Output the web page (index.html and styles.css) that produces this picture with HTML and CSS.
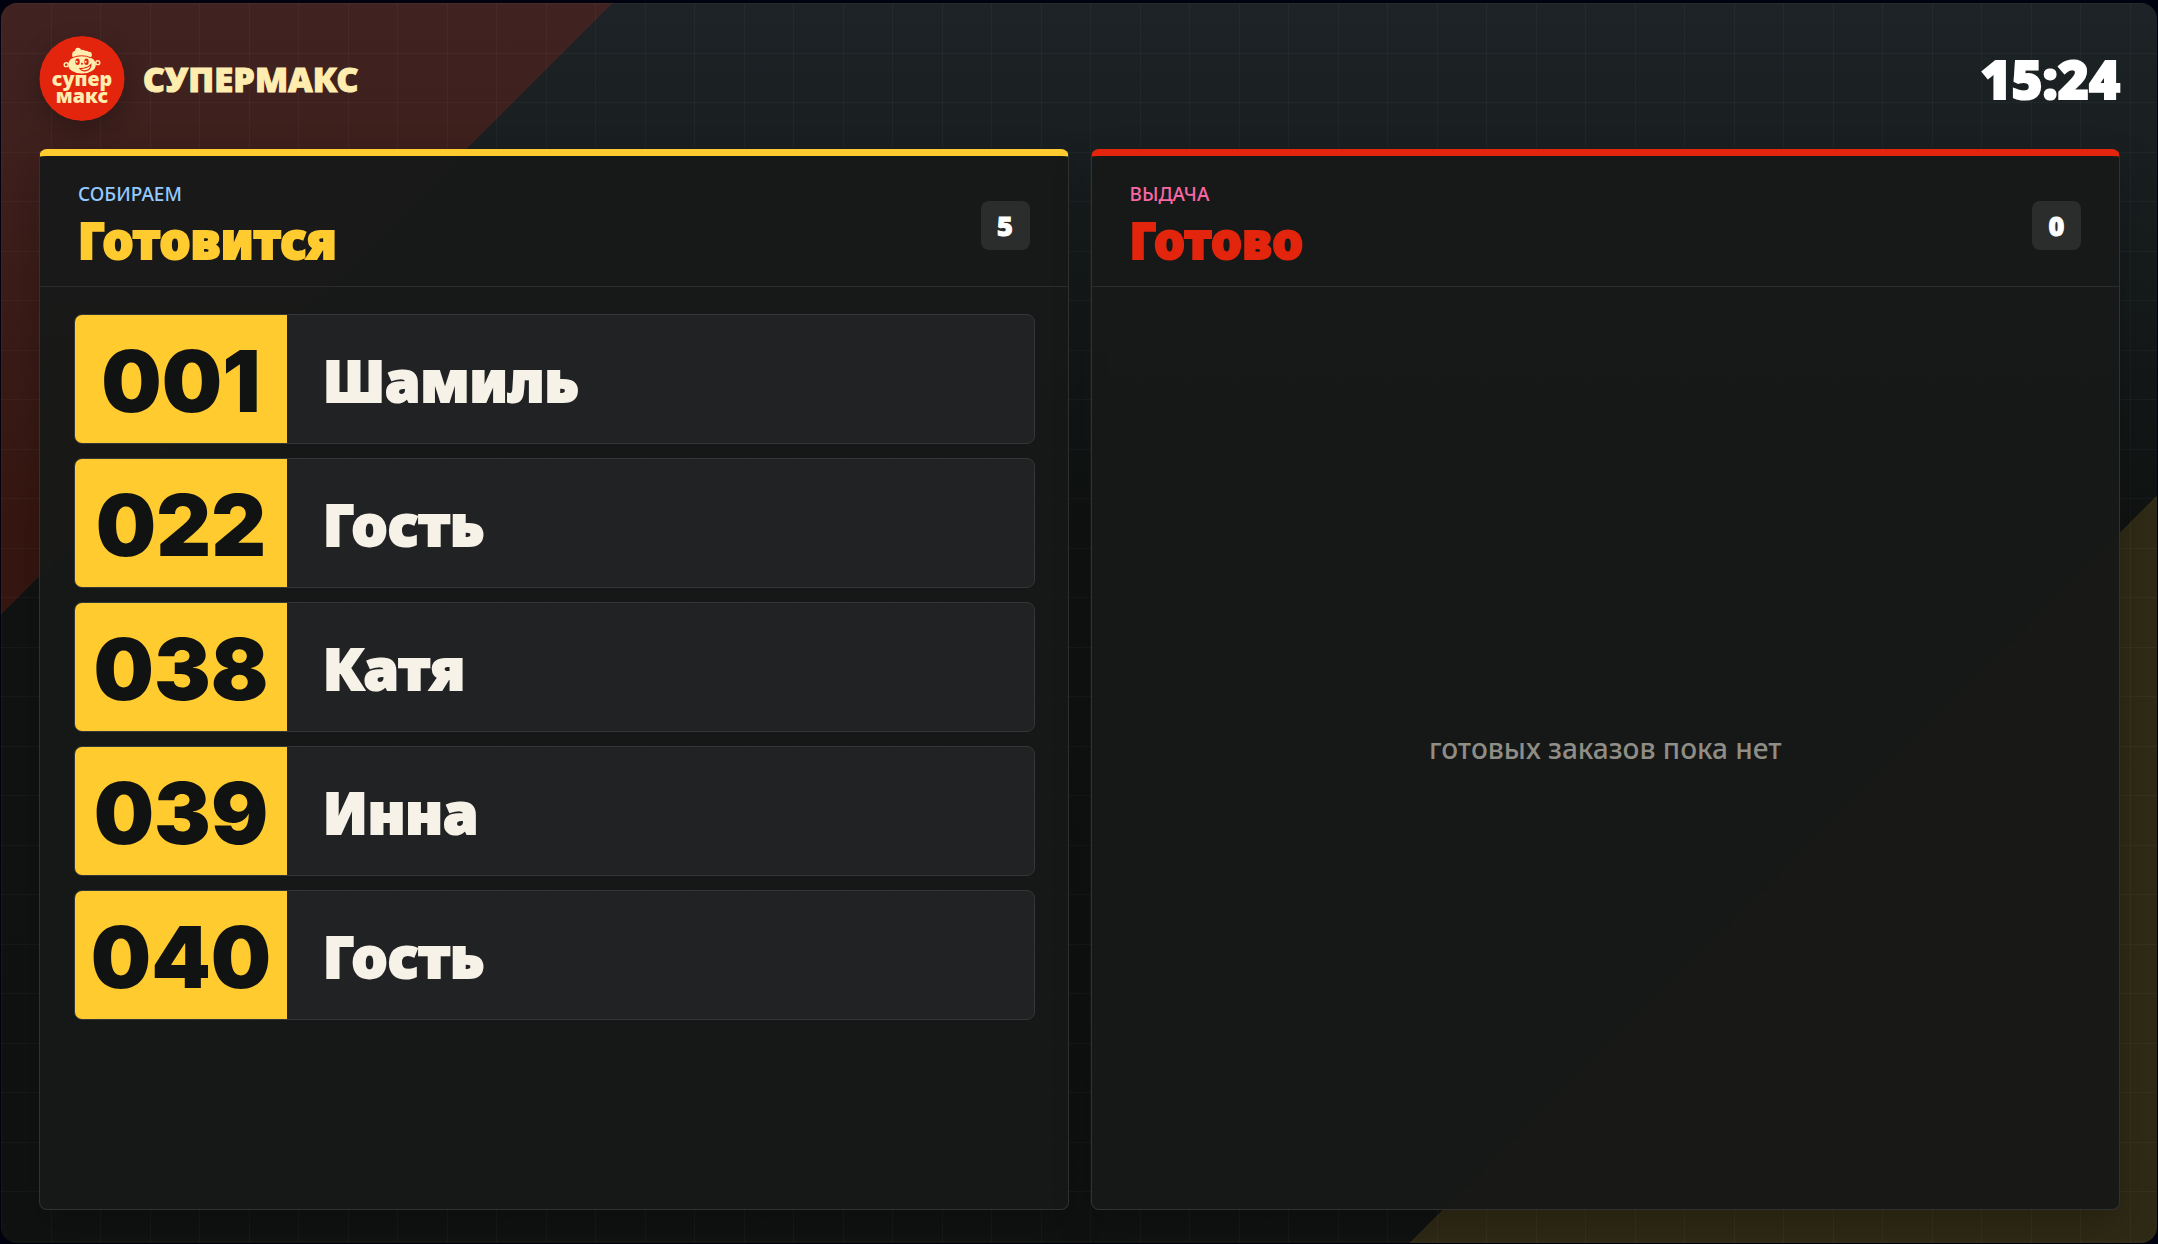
FILE: index.html
```html
<!DOCTYPE html>
<html lang="ru">
	<head>
	<meta charset="utf-8">
	<meta name="viewport" content="width=device-width, initial-scale=1">
	<title>СУПЕРМАКС</title>
	<link rel="stylesheet" href="styles.css">
	</head>
	<body>
		<div class="board">

			<header class="topbar">
				<div class="brand">
					<svg class="logo" viewBox="0 0 86 86" role="img" aria-label="Супер Макс">
						<circle cx="43" cy="43" r="43" fill="#e2250c"/>
						<!-- Hair, head and ears -->
						<g fill="#ffedb0">
							<circle cx="37" cy="19" r="4"/>
							<circle cx="39" cy="15" r="3"/>
							<circle cx="43" cy="18" r="4"/>
							<circle cx="47" cy="18" r="3"/>
							<circle cx="50" cy="19" r="3"/>
							<path d="M34 20h19l-3 2q-7-2-14 0z"/>
							<ellipse cx="43" cy="29" rx="14" ry="9"/>
						</g>
						<path d="M33 22q10-4 19 0" fill="none" stroke="#e2250c" stroke-width="1"/>
						<g fill="#e2250c" stroke="#ffedb0" stroke-width="1.4">
							<circle cx="27" cy="29" r="2"/>
							<circle cx="59" cy="27" r="2"/>
						</g>
						<!-- Eyes, nose and smile -->
						<g fill="#e2250c">
							<ellipse cx="38.500" cy="26" rx="2.200" ry="3.300"/>
							<ellipse cx="47.500" cy="26" rx="2.200" ry="3.300"/>
							<circle cx="43" cy="28" r="1"/>
						</g>
						<g fill="#ffedb0">
							<circle cx="37.700" cy="26" r="1"/>
							<circle cx="46.700" cy="26" r="1"/>
						</g>
						<path d="M41 33q7 0 11-4q0 5-5 6q-4 1-6-2z" fill="none" stroke="#e2250c" stroke-width="1.200"/>
						<text class="logo-text" x="43" y="51">супер</text>
						<text class="logo-text" x="43" y="68">макс</text>
					</svg>
					<h1 class="brand-name">СУПЕРМАКС</h1>
				</div>
				<time class="clock" datetime="15:24">15:24</time>
			</header>

			<main class="columns">

				<section class="panel panel-cooking" aria-labelledby="cookingTitle">
					<div class="panel-head">
						<div class="panel-heading">
							<p class="panel-label">СОБИРАЕМ</p>
							<h2 class="panel-title" id="cookingTitle">Готовится</h2>
						</div>
						<span class="count">5</span>
					</div>
					<ul class="orders">
						<li class="order"><span class="order-number">001</span><span class="order-name">Шамиль</span></li>
						<li class="order"><span class="order-number">022</span><span class="order-name">Гость</span></li>
						<li class="order"><span class="order-number">038</span><span class="order-name">Катя</span></li>
						<li class="order"><span class="order-number">039</span><span class="order-name">Инна</span></li>
						<li class="order"><span class="order-number">040</span><span class="order-name">Гость</span></li>
					</ul>
				</section>

				<section class="panel panel-ready" aria-labelledby="readyTitle">
					<div class="panel-head">
						<div class="panel-heading">
							<p class="panel-label">ВЫДАЧА</p>
							<h2 class="panel-title" id="readyTitle">Готово</h2>
						</div>
						<span class="count">0</span>
					</div>
					<p class="empty">готовых заказов пока нет</p>
				</section>

			</main>
		</div>
	</body>
</html>
```

FILE: styles.css
```css
* { box-sizing: border-box; }
body { margin: 0; min-height: 100vh; padding: 3px 1px 1px; display: flex; background: #00030f; font-family: "Noto Sans", "Open Sans", sans-serif; color: #fff; }
h1, h2, p, ul { margin: 0; padding: 0; }

.board {
	flex: 1;
	display: flex;
	flex-direction: column;
	gap: 28px;
	padding: 33px 37px 33px 38px;
	border-radius: 16px;
	/* two grid lines per 99px tile, then the corner wedges */
	background:
		linear-gradient(90deg, rgba(255,255,255,.03) 1px, transparent 1px 50px, rgba(255,255,255,.03) 50px 51px, transparent 51px) 0 0 / 99px 99px,
		linear-gradient(rgba(255,255,255,.03) 1px, transparent 1px 50px, rgba(255,255,255,.03) 50px 51px, transparent 51px) 0 0 / 99px 99px,
		linear-gradient(135deg, rgba(226,37,12,.18) 0 18%, transparent 18% 78%, rgba(255,203,47,.13) 78%),
		linear-gradient(#1d2326, #101312 42%, #101211);
}

.topbar { display: flex; justify-content: space-between; align-items: center; }
.brand { display: flex; align-items: center; gap: 18px; }
.logo { width: 86px; height: 85px; border-radius: 50%; box-shadow: 0 8px 24px rgba(0,0,0,.25); }
.logo-text { font-size: 20px; font-weight: 900; fill: #ffedb0; text-anchor: middle; }
.brand-name { font-size: 34px; line-height: 40px; font-weight: 900; color: #ffedb0; -webkit-text-stroke: 1px; }
.clock { font-size: 53px; line-height: 64px; font-weight: 900; -webkit-text-stroke: 2px; }

.columns { flex: 1; display: grid; grid-template-columns: 1fr 1fr; gap: 22px; }
.panel { display: flex; flex-direction: column; border: 1px solid #303231; border-top-width: 7px; border-radius: 8px; background: rgba(23,25,24,.96); box-shadow: 0 16px 40px rgba(0,0,0,.2); }
.panel-cooking { border-top-color: #ffcb2f; }
.panel-ready { border-top-color: #e2250c; }
.panel-head { display: flex; justify-content: space-between; align-items: center; height: 131px; padding: 26px 38px 17px; border-bottom: 1px solid #2b2d2c; }
.panel-heading { display: grid; gap: 3px; }
.panel-label { font-size: 19px; line-height: 26px; font-weight: 500; }
.panel-cooking .panel-label { color: #93c9ff; }
.panel-ready .panel-label { color: #f868a4; }
.panel-title { font-size: 49px; line-height: 60px; font-weight: 900; -webkit-text-stroke: 2px; }
.panel-cooking .panel-title { color: #ffcb2f; }
.panel-ready .panel-title { color: #e2250c; }
.count { min-width: 49px; height: 49px; border-radius: 8px; background: #2b2c2c; font-size: 27px; line-height: 49px; font-weight: 900; text-align: center; -webkit-text-stroke: 1px; }

.orders { display: grid; gap: 14px; padding: 27px 33px 27px 34px; list-style: none; }
.order { display: grid; grid-template-columns: 212px 1fr; height: 130px; overflow: hidden; border: 1px solid #343638; border-radius: 8px; background: #212224; }
.order-number { display: flex; align-items: center; justify-content: center; padding-top: 6px; background: #ffcb2f; color: #101312; font-family: Inter, "Noto Sans", sans-serif; font-size: 85px; line-height: 100px; font-weight: 900; }
.order-name { align-self: center; padding: 2px 36px 0; color: #f7f2e8; font-size: 57px; line-height: 72px; font-weight: 900; -webkit-text-stroke: 2px; }

.empty { flex: 1; display: flex; align-items: center; justify-content: center; color: #8f8d85; font-size: 28px; line-height: 36px; font-weight: 500; }
```
